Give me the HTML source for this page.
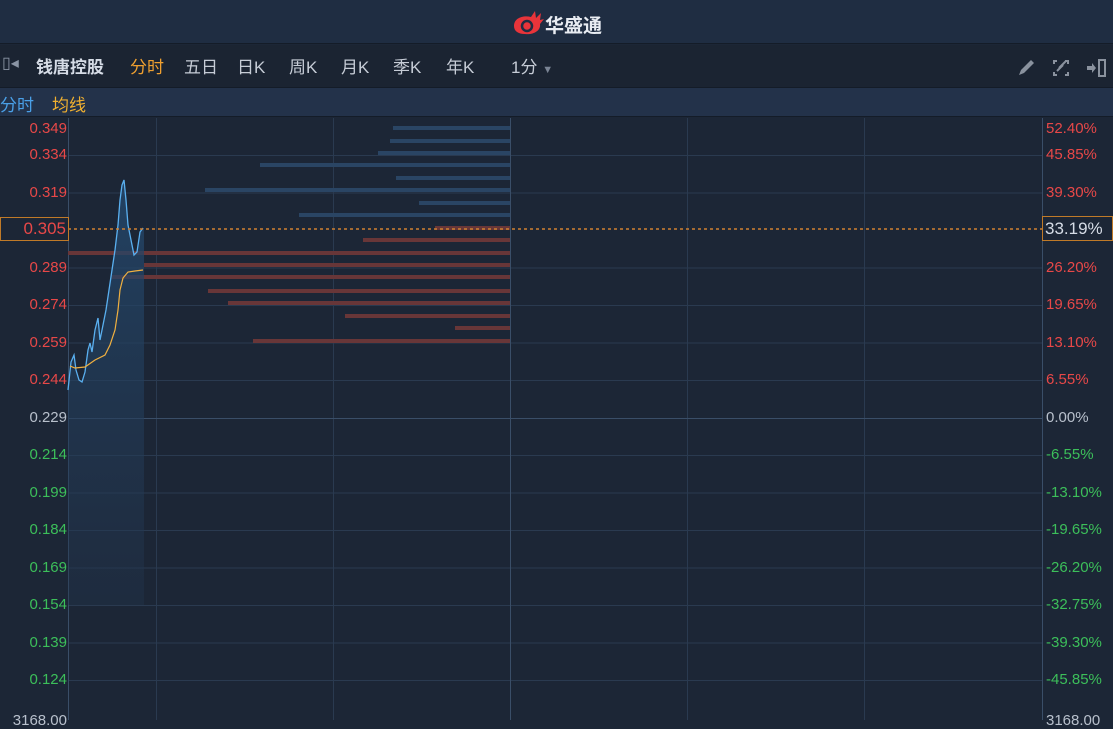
<!DOCTYPE html>
<html><head><meta charset="utf-8"><style>
*{margin:0;padding:0;box-sizing:border-box}
body{width:1113px;height:720px;overflow:hidden;background:#1c2636;font-family:"Liberation Sans","Noto Sans CJK SC",sans-serif;position:relative}
.top{position:absolute;left:0;top:0;width:1113px;height:44px;background:#1f2d42;border-bottom:1px solid #141c28}
.tb{position:absolute;left:0;top:45px;width:1113px;height:43px;background:#1b2432;border-bottom:1px solid #141c28}
.sb{position:absolute;left:0;top:88px;width:1113px;height:29px;background:#23324a;border-bottom:1px solid #141c28}
.t{position:absolute;font-size:17px;color:#c6ccd6;white-space:nowrap}
.l{position:absolute;font-size:15px;right:1046px;white-space:nowrap}
.r{position:absolute;font-size:15px;left:1046px;white-space:nowrap}
.red{color:#e84848}.grn{color:#3cbf5a}.gry{color:#b8c0cc}
</style></head><body>
<div class="top">
<svg style="position:absolute;left:511px;top:10px" width="34" height="26" viewBox="0 0 34 26"><path d="M3 16 C3 8 12 5 20 7 L24 1 L25 8 L30 3 L29 10 L33 9 L29 14 C30 21 22 25 14 24 C7 24 3 21 3 16 Z" fill="#e8343a"/><circle cx="16" cy="16" r="5" fill="none" stroke="#1f2d42" stroke-width="2.5"/></svg>
<div class="t" style="left:545px;top:11px;font-size:19px;font-weight:bold;color:#e8ecf2">华盛通</div>
</div>
<div class="tb">
<div class="t" style="left:2px;top:8px;color:#8a94a4;font-size:16px">▯◂</div>
<div class="t" style="left:36px;top:8px;font-weight:bold;color:#d6dce6">钱唐控股</div>
<div class="t" style="left:130px;top:8px;color:#f0a030">分时</div>
<div class="t" style="left:184px;top:8px">五日</div>
<div class="t" style="left:237px;top:8px">日K</div>
<div class="t" style="left:289px;top:8px">周K</div>
<div class="t" style="left:341px;top:8px">月K</div>
<div class="t" style="left:393px;top:8px">季K</div>
<div class="t" style="left:446px;top:8px">年K</div>
<div class="t" style="left:511px;top:8px">1分 <span style="font-size:11px;color:#7a8494">▼</span></div>
<svg style="position:absolute;left:1016px;top:12px" width="96" height="22" viewBox="0 0 96 22">
<path d="M3 18 L5 13 L15 3 L18 6 L8 16 Z" fill="#8a929e"/>
<g stroke="#8a929e" stroke-width="2" fill="none"><path d="M41 4h-3v3M49 4h3v3M41 18h-3v-3M49 18h3v-3M43 11l7-7M41 14l6-6"/></g>
<path d="M71 9h5v-3l4 5-4 5v-3h-5z" fill="#8a929e"/><rect x="83" y="3" width="6" height="16" fill="none" stroke="#8a929e" stroke-width="2"/>
</svg>
</div>
<div class="sb">
<div class="t" style="left:0;top:3px;color:#4aa0e8">分时</div>
<div class="t" style="left:52px;top:3px;color:#f0b030">均线</div>
</div>
<svg style="position:absolute;left:0;top:118px" width="1113" height="602" viewBox="0 118 1113 602">
<g stroke="#2a3a50" stroke-width="1">
<line x1="68" y1="155.5" x2="1042" y2="155.5"/><line x1="68" y1="193" x2="1042" y2="193"/><line x1="68" y1="268" x2="1042" y2="268"/><line x1="68" y1="305.5" x2="1042" y2="305.5"/><line x1="68" y1="343" x2="1042" y2="343"/><line x1="68" y1="380.5" x2="1042" y2="380.5"/><line x1="68" y1="455.5" x2="1042" y2="455.5"/><line x1="68" y1="493" x2="1042" y2="493"/><line x1="68" y1="530.5" x2="1042" y2="530.5"/><line x1="68" y1="568" x2="1042" y2="568"/><line x1="68" y1="605.5" x2="1042" y2="605.5"/><line x1="68" y1="643" x2="1042" y2="643"/><line x1="68" y1="680.5" x2="1042" y2="680.5"/>
<line x1="156.5" y1="118" x2="156.5" y2="720"/><line x1="333.5" y1="118" x2="333.5" y2="720"/><line x1="687.5" y1="118" x2="687.5" y2="720"/><line x1="864.5" y1="118" x2="864.5" y2="720"/>
</g>
<g stroke="#3a4e68"><line x1="68" y1="418.5" x2="1042" y2="418.5"/><line x1="510.5" y1="118" x2="510.5" y2="720"/><line x1="68.5" y1="118" x2="68.5" y2="720"/><line x1="1042.5" y1="118" x2="1042.5" y2="720"/></g>
<g fill="#2a4564">
<rect x="393" y="126" width="117" height="4"/><rect x="390" y="139" width="120" height="4"/><rect x="378" y="151" width="132" height="4"/><rect x="260" y="163" width="250" height="4"/><rect x="396" y="176" width="114" height="4"/><rect x="205" y="188" width="305" height="4"/><rect x="419" y="201" width="91" height="4"/><rect x="299" y="213" width="211" height="4"/></g>
<g fill="#683638">
<rect x="435" y="226" width="75" height="4"/><rect x="363" y="238" width="147" height="4"/><rect x="68" y="251" width="442" height="4"/><rect x="144" y="263" width="366" height="4"/><rect x="112" y="275" width="398" height="4"/><rect x="208" y="289" width="302" height="4"/><rect x="228" y="301" width="282" height="4"/><rect x="345" y="314" width="165" height="4"/><rect x="455" y="326" width="55" height="4"/><rect x="253" y="339" width="257" height="4"/></g>
<defs><linearGradient id="g" x1="0" y1="0" x2="0" y2="1"><stop offset="0" stop-color="#24496e" stop-opacity=".8"/><stop offset="1" stop-color="#22344c" stop-opacity=".4"/></linearGradient></defs>
<path d="M68 390 L71 362 L74 355 L76 370 L79 380 L82 382 L85 372 L88 350 L90 343 L92 352 L95 330 L98 318 L100 340 L103 325 L106 310 L109 290 L112 270 L115 250 L118 225 L120 200 L122 185 L124 180 L126 200 L128 225 L131 240 L134 255 L137 252 L140 232 L143 228 L144 228 L144 605 L68 605 Z" fill="url(#g)"/>
<path d="M68 390 L71 362 L74 355 L76 370 L79 380 L82 382 L85 372 L88 350 L90 343 L92 352 L95 330 L98 318 L100 340 L103 325 L106 310 L109 290 L112 270 L115 250 L118 225 L120 200 L122 185 L124 180 L126 200 L128 225 L131 240 L134 255 L137 252 L140 232 L143 228" fill="none" stroke="#5ab0f0" stroke-width="1.3"/>
<path d="M70 366 L75 368 L85 367 L95 360 L105 355 L110 345 L115 330 L118 310 L120 290 L123 278 L128 272 L135 271 L143 270" fill="none" stroke="#f0b040" stroke-width="1.2"/>
<line x1="68" y1="229" x2="1042" y2="229" stroke="#d08030" stroke-width="1.5" stroke-dasharray="3,3"/>
</svg>
<div class="l red" style="top:120px">0.349</div>
<div class="l red" style="top:146px">0.334</div>
<div class="l red" style="top:184px">0.319</div>
<div style="position:absolute;left:0;top:217px;width:69px;height:24px;border:1px solid #c07a28;background:#1c2636;color:#e84848;font-size:17px;text-align:right;padding-right:2px;line-height:22px">0.305</div>
<div class="l red" style="top:259px">0.289</div>
<div class="l red" style="top:296px">0.274</div>
<div class="l red" style="top:334px">0.259</div>
<div class="l red" style="top:371px">0.244</div>
<div class="l gry" style="top:409px">0.229</div>
<div class="l grn" style="top:446px">0.214</div>
<div class="l grn" style="top:484px">0.199</div>
<div class="l grn" style="top:521px">0.184</div>
<div class="l grn" style="top:559px">0.169</div>
<div class="l grn" style="top:596px">0.154</div>
<div class="l grn" style="top:634px">0.139</div>
<div class="l grn" style="top:671px">0.124</div>
<div class="l gry" style="top:712px">3168.00</div>
<div class="r red" style="top:120px">52.40%</div>
<div class="r red" style="top:146px">45.85%</div>
<div class="r red" style="top:184px">39.30%</div>
<div style="position:absolute;left:1042px;top:216px;width:71px;height:25px;border:1px solid #c07a28;background:#1c2636;color:#d6dce6;font-size:17px;padding-left:2px;line-height:23px">33.19%</div>
<div class="r red" style="top:259px">26.20%</div>
<div class="r red" style="top:296px">19.65%</div>
<div class="r red" style="top:334px">13.10%</div>
<div class="r red" style="top:371px">6.55%</div>
<div class="r gry" style="top:409px">0.00%</div>
<div class="r grn" style="top:446px">-6.55%</div>
<div class="r grn" style="top:484px">-13.10%</div>
<div class="r grn" style="top:521px">-19.65%</div>
<div class="r grn" style="top:559px">-26.20%</div>
<div class="r grn" style="top:596px">-32.75%</div>
<div class="r grn" style="top:634px">-39.30%</div>
<div class="r grn" style="top:671px">-45.85%</div>
<div class="r gry" style="top:712px">3168.00</div>
</body></html>
